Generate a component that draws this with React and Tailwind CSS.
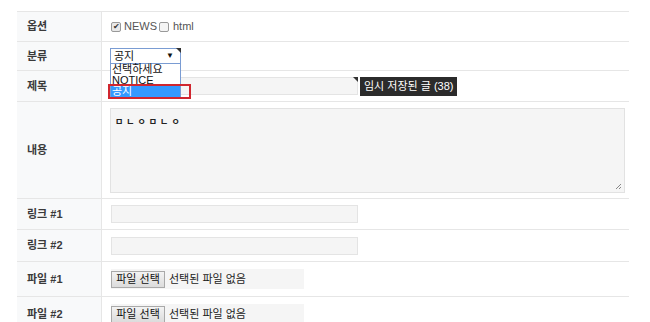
import React from "react";

const font = { fontFamily: '"Liberation Sans", "Noto Sans CJK KR", sans-serif' };

function Label({ children }) {
  return (
    <th className="w-[85px] bg-[#f8f9fa] border-b border-r border-[#e6e6e6] pl-[10px] text-left align-middle text-[11px] font-semibold text-[#3a3a3a]">
      {children}
    </th>
  );
}

function FileInput() {
  return (
    <div className="flex h-[20px] w-[193px] items-center bg-[#f5f5f5] text-[11px] text-[#222]">
      <button className="h-[17px] w-[54px] border border-[#a9a9a9] bg-gradient-to-b from-[#f3f3f3] to-[#dcdcdc] text-[11px] leading-none text-[#111]">
        파일 선택
      </button>
      <span className="ml-[4px]">선택된 파일 없음</span>
    </div>
  );
}

export default function App() {
  return (
    <div className="h-[322px] w-[650px] overflow-hidden bg-white pl-[17px] pt-[11px]" style={font}>
      <table className="w-[612px] border-collapse border-t border-[#e6e6e6]">
        <tbody>
          {/* 옵션 */}
          <tr className="h-[30px]">
            <Label>옵션</Label>
            <td className="border-b border-[#e6e6e6] pl-[9px]">
              <div className="flex items-center text-[11px] text-[#555]">
                <span className="flex h-[10px] w-[10px] items-center justify-center rounded-[2px] border border-[#999] bg-[#e8e8e8] text-[8px] leading-none text-[#333]">
                  ✔
                </span>
                <span className="ml-[3px]">NEWS</span>
                <span className="ml-[2px] h-[10px] w-[10px] rounded-[2px] border border-[#999] bg-[#f4f4f4]"></span>
                <span className="ml-[4px]">html</span>
              </div>
            </td>
          </tr>
          {/* 분류 */}
          <tr className="h-[29px]">
            <Label>분류</Label>
            <td className="border-b border-[#e6e6e6] pl-[8px]">
              <div className="relative w-[71px]">
                <div className="relative flex h-[16px] items-center justify-between border border-[#7a9cd3] bg-white pl-[3px] pr-[6px] text-[11px] text-[#111]">
                  <span>공지</span>
                  <span className="text-[8px]">▼</span>
                  <span className="absolute right-[-1px] top-[-1px] h-0 w-0 border-l-[5px] border-t-[5px] border-l-transparent border-t-[#333]"></span>
                </div>
                <div className="absolute left-0 top-[16px] z-10 w-[71px] border border-t-0 border-[#7a9cd3] bg-white text-[11px] text-[#111]">
                  <div className="h-[11px] pl-[1px] leading-[11px]">선택하세요</div>
                  <div className="h-[11px] pl-[1px] leading-[11px]">NOTICE</div>
                  <div className="h-[11px] bg-[#3399ff] pl-[1px] leading-[11px] text-white">공지</div>
                </div>
                <div className="absolute left-[-2px] top-[36px] z-20 h-[15px] w-[83px] border-2 border-[#d0262f]"></div>
              </div>
            </td>
          </tr>
          {/* 제목 */}
          <tr className="h-[31px]">
            <Label>제목</Label>
            <td className="border-b border-[#e6e6e6] pl-[8px]">
              <div className="flex items-center">
                <div className="relative h-[18px] w-[248px] border border-[#e4e4e4] bg-[#f5f5f5]">
                  <span className="absolute right-[-1px] top-[-1px] h-0 w-0 border-l-[5px] border-t-[5px] border-l-transparent border-t-[#333]"></span>
                </div>
                <div className="ml-[2px] flex h-[19px] items-center bg-[#2b2b2b] px-[4px] text-[11px] text-white">
                  임시 저장된 글 (38)
                </div>
              </div>
            </td>
          </tr>
          {/* 내용 */}
          <tr className="h-[97px]">
            <Label>내용</Label>
            <td className="border-b border-[#e6e6e6] pl-[8px] pr-[4px]">
              <div className="relative h-[85px] w-[515px] border border-[#e2e2e2] bg-[#f5f5f5] px-[4px] pt-[7px] text-[9px] font-bold tracking-[3px] text-[#222]">
                ㅁㄴㅇㅁㄴㅇ
                <svg className="absolute bottom-[2px] right-[2px]" width="7" height="7" viewBox="0 0 7 7">
                  <path d="M6 1 L1 6 M6 4 L4 6" stroke="#888" strokeWidth="1" />
                </svg>
              </div>
            </td>
          </tr>
          {/* 링크 #1 */}
          <tr className="h-[31px]">
            <Label>링크 #1</Label>
            <td className="border-b border-[#e6e6e6] pl-[9px]">
              <div className="h-[18px] w-[247px] border border-[#e4e4e4] bg-[#f5f5f5]"></div>
            </td>
          </tr>
          {/* 링크 #2 */}
          <tr className="h-[32px]">
            <Label>링크 #2</Label>
            <td className="border-b border-[#e6e6e6] pl-[9px]">
              <div className="h-[18px] w-[247px] border border-[#e4e4e4] bg-[#f5f5f5]"></div>
            </td>
          </tr>
          {/* 파일 #1 */}
          <tr className="h-[35px]">
            <Label>파일 #1</Label>
            <td className="border-b border-[#e6e6e6] pl-[9px]">
              <FileInput />
            </td>
          </tr>
          {/* 파일 #2 */}
          <tr className="h-[35px]">
            <Label>파일 #2</Label>
            <td className="border-b border-[#e6e6e6] pl-[9px]">
              <FileInput />
            </td>
          </tr>
        </tbody>
      </table>
    </div>
  );
}
